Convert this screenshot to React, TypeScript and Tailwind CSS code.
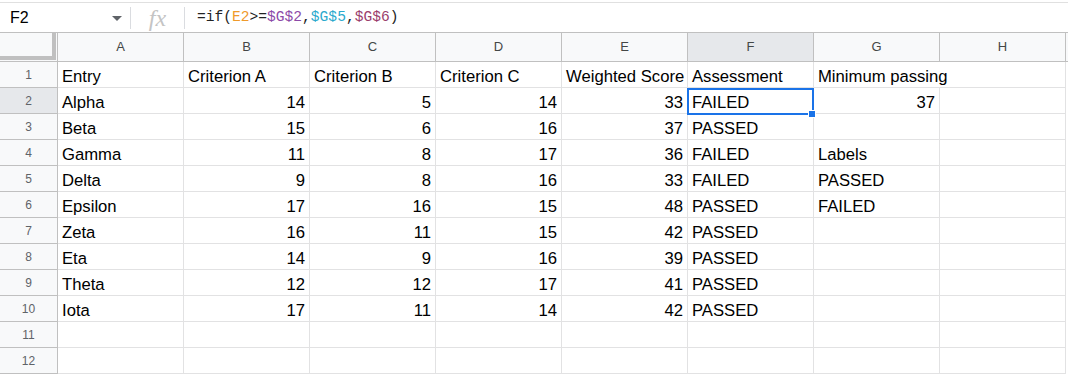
import React from 'react';

const COLS = ['A', 'B', 'C', 'D', 'E', 'F', 'G', 'H'];

type Cell = string | number | null;

// rows of the sheet: A..H
const ROWS: Cell[][] = [
    ['Entry', 'Criterion A', 'Criterion B', 'Criterion C', 'Weighted Score', 'Assessment', 'Minimum passing', null],
    ['Alpha', 14, 5, 14, 33, 'FAILED', 37, null],
    ['Beta', 15, 6, 16, 37, 'PASSED', null, null],
    ['Gamma', 11, 8, 17, 36, 'FAILED', 'Labels', null],
    ['Delta', 9, 8, 16, 33, 'FAILED', 'PASSED', null],
    ['Epsilon', 17, 16, 15, 48, 'PASSED', 'FAILED', null],
    ['Zeta', 16, 11, 15, 42, 'PASSED', null, null],
    ['Eta', 14, 9, 16, 39, 'PASSED', null, null],
    ['Theta', 12, 12, 17, 41, 'PASSED', null, null],
    ['Iota', 17, 11, 14, 42, 'PASSED', null, null],
    [null, null, null, null, null, null, null, null],
    [null, null, null, null, null, null, null, null],
];

const CaretDown = () => (
    <svg width="10" height="5" viewBox="0 0 10 5">
        <path d="M0 0h10L5 5z" fill="#5f6368" />
    </svg>
);

function FormulaBar() {
    return (
        <div className="mt-[2px] flex h-[30px] items-center border-t border-[#e0e0e0] bg-white">
            {/* Name box */}
            <div className="flex w-[130px] items-center justify-between pl-[10px] pr-[8px] pt-[1px]">
                <span className="text-[16px] text-black">F2</span>
                <CaretDown />
            </div>
            <div className="h-[22px] w-px bg-[#dadce0]" />
            <div className="flex w-[53px] items-center justify-center">
                <span className="font-['Liberation_Serif',serif] text-[24px] italic leading-none text-[#c4c4c4]">fx</span>
            </div>
            <div className="h-[22px] w-px bg-[#dadce0]" />
            <div className="pl-[12px] pt-[1px] font-['Liberation_Mono',monospace] text-[14.6px] text-[#222]">
                =if(<span className="text-[#ef9a2b]">E2</span>&gt;=<span className="text-[#8c4aa8]">$G$2</span>,
                <span className="text-[#2ba9cd]">$G$5</span>,<span className="text-[#9a3d6c]">$G$6</span>)
            </div>
        </div>
    );
}

function ColumnHeader() {
    return (
        <div className="flex h-[30px] border-y border-[#c0c0c0] bg-[#f8f9fa]">
            <div className="w-[58px] shrink-0 border-r border-[#c0c0c0]">
                <div className="h-[27px] w-[56px] border-r-[4px] border-b-[4px] border-[#c0c0c0]" />
            </div>
            {COLS.map((c) => (
                <div
                    key={c}
                    className={`flex w-[126px] shrink-0 items-center justify-center border-r border-[#c0c0c0] text-[13px] text-[#444746] ${
                        c === 'F' ? 'bg-[#e6e8eb]' : ''
                    }`}
                >
                    {c}
                </div>
            ))}
        </div>
    );
}

export default function App() {
    return (
        <div className="relative h-[376px] w-[1068px] overflow-hidden bg-white font-['Liberation_Sans',Arial,sans-serif]">
            <FormulaBar />
            <ColumnHeader />

            {ROWS.map((row, r) => (
                <div key={r} className="flex h-[26px]">
                    <div
                        className={`flex w-[58px] shrink-0 items-center justify-center border-r border-b border-[#c0c0c0] text-[12px] text-[#5f6368] ${
                            r === 1 ? 'bg-[#e6e8eb]' : 'bg-[#f8f9fa]'
                        }`}
                    >
                        {r + 1}
                    </div>
                    {row.map((v, c) => (
                        <div
                            key={c}
                            className={`flex w-[126px] shrink-0 items-end whitespace-nowrap border-b border-[#e2e2e3] px-[4px] pb-0 text-[16.67px] leading-[20px] text-black ${
                                typeof v === 'number' ? 'justify-end' : 'justify-start'
                            } ${r === 0 && c === 6 ? 'relative z-10 overflow-visible' : 'border-r'}`}
                        >
                            {v}
                        </div>
                    ))}
                </div>
            ))}

            {/* Selected cell F2 */}
            <div className="pointer-events-none absolute left-[687px] top-[88px] h-[27px] w-[127px] border-2 border-[#1a73e8]" />
            <div className="absolute left-[808px] top-[110px] h-[8px] w-[8px] border border-white bg-[#1a73e8]" />
        </div>
    );
}
